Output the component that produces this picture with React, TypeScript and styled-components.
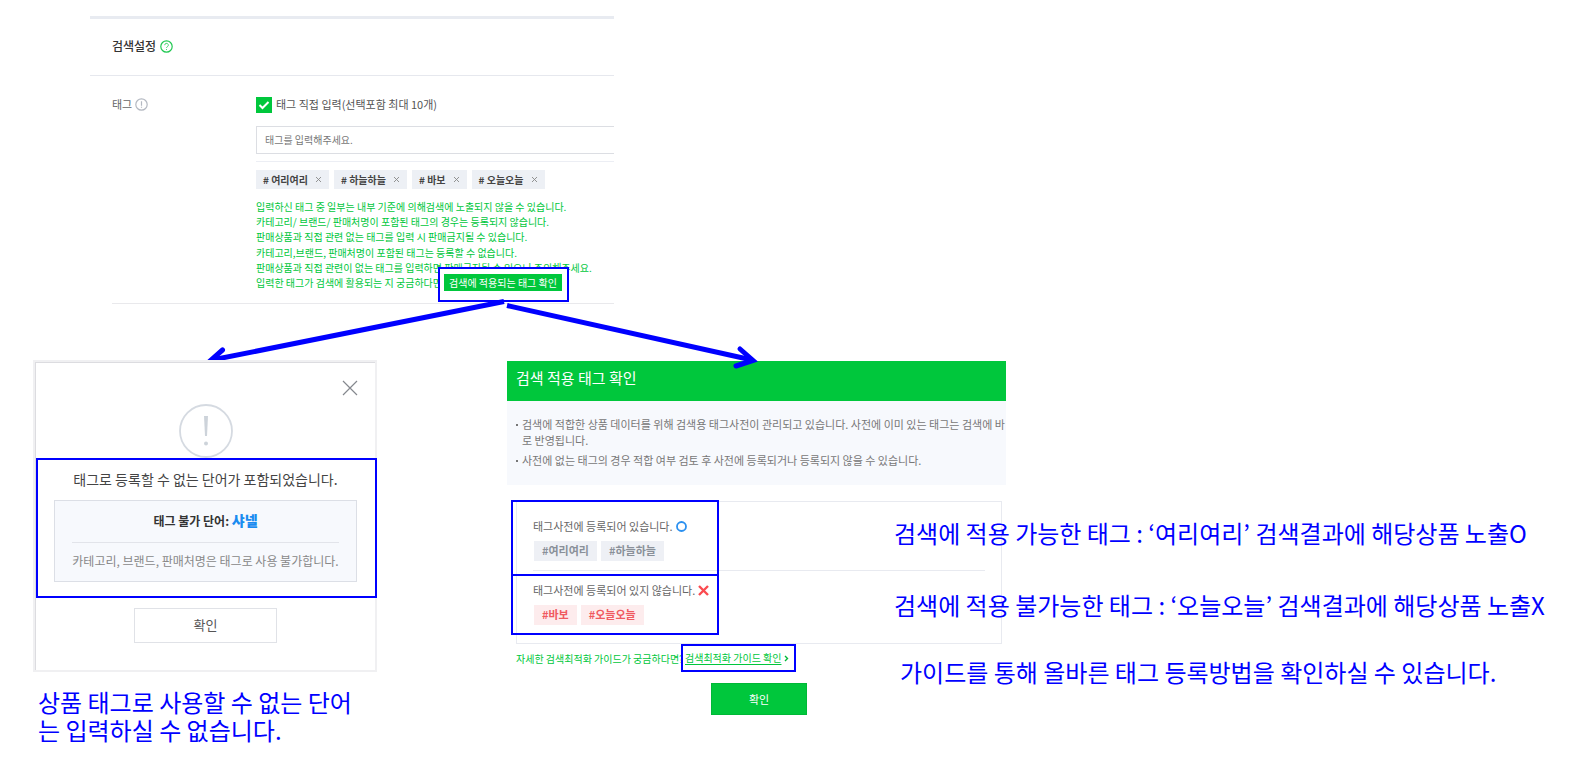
import React from 'react';
import styled, { createGlobalStyle } from 'styled-components';

const BLUE = '#0000ff';
const GREEN = '#00c73c';

const GlobalStyle = createGlobalStyle`
  *, *::before, *::after { box-sizing: border-box; }
  body { margin: 0; background: #fff; }
  body, button, input { font-family: "Noto Sans CJK KR", sans-serif; }
  h1, h2, p, ul { margin: 0; padding: 0; }
`;

const Page = styled.main`
  position: relative;
  padding: 16px 0 28px;
`;

/* ---------- search settings ---------- */

const Settings = styled.section`
  width: 33%;
  min-width: 520px;
  margin-left: 90px;
  border-top: 3px solid #e8ebf1;
`;

const SettingsHead = styled.header`
  display: flex;
  align-items: center;
  gap: 4px;
  height: 57px;
  padding: 0 0 2px 22px;
  border-bottom: 1px solid #e6e8ee;
`;

const SettingsTitle = styled.h2`
  font-size: 12px;
  line-height: 16px;
  font-weight: 500;
  color: #333;
`;

const SettingsRow = styled.div`
  display: grid;
  grid-template-columns: 144px 1fr;
  margin-left: 22px;
  padding: 21px 0 13px;
  border-bottom: 1px solid #e9e9ec;
`;

const RowLabel = styled.div`
  display: flex;
  align-items: center;
  gap: 3px;
  height: 14px;
  font-size: 11px;
  color: #666;
`;

const Fields = styled.div`
  position: relative;
  min-width: 0;
`;

const CheckLabel = styled.label`
  position: relative;
  display: flex;
  gap: 4px;
  height: 16px;
  font-size: 11px;
  line-height: 14px;
  color: #555;
`;

const CheckBox = styled.input`
  appearance: none;
  width: 16px;
  height: 16px;
  margin: 0;
  background: ${GREEN};
`;

const CheckMark = styled.svg`
  position: absolute;
  left: 0;
  top: 0;
  pointer-events: none;
`;

const TagInput = styled.input`
  display: block;
  width: 100%;
  height: 28px;
  margin-top: 13px;
  padding: 0 8px 2px;
  border: 1px solid #dcdee3;
  border-right: 0;
  border-radius: 0;
  font-size: 10px;
  &::placeholder { color: #777; opacity: 1; }
`;

const TagList = styled.ul`
  display: flex;
  gap: 5px;
  margin-top: 7px;
  padding-top: 8px;
  border-top: 1px solid #eceef4;
  list-style: none;
`;

const TagItem = styled.li`
  display: flex;
  align-items: center;
  gap: 7px;
  height: 19px;
  padding: 0 7px 1px;
  background: #edf0f5;
  font-size: 10px;
  font-weight: 700;
  color: #444;
`;

const RemoveTag = styled.button`
  display: flex;
  padding: 0;
  border: 0;
  background: none;
  color: #888;
`;

const Guide = styled.p`
  margin-top: 10px;
  font-size: 10px;
  line-height: 15px;
  color: ${GREEN};
  white-space: nowrap;
  & + & { margin-top: 1px; }
`;

const CheckCallout = styled.div`
  position: absolute;
  left: 182px;
  bottom: -12px;
  padding: 5px 5px 9px 4px;
  border: 2px solid ${BLUE};
  background: #fff;
`;

const SmallButton = styled.button`
  display: block;
  width: 118px;
  height: 17px;
  padding: 0;
  border: 0;
  background: ${GREEN};
  color: #fff;
  font-size: 10px;
  line-height: 16px;
  white-space: nowrap;
`;

/* ---------- lower area ---------- */

const Lower = styled.div`
  display: flex;
  align-items: flex-start;
  margin-top: 56px;
  padding-left: 33px;
`;

const LeftColumn = styled.div`
  flex: 0 0 344px;
`;

const Alert = styled.section`
  position: relative;
  display: flex;
  flex-direction: column;
  align-items: center;
  height: 312px;
  padding: 39px 18px 0 19px;
  border: 2px solid #f0f0f2;
  box-shadow: inset 1px 1px 0 #dcdce0;
`;

const CloseButton = styled.button`
  position: absolute;
  top: 18px;
  right: 17px;
  display: flex;
  padding: 0;
  border: 0;
  background: none;
`;

const AlertMessage = styled.p`
  margin-top: 6px;
  font-size: 14px;
  line-height: 24px;
  color: #444;
  white-space: nowrap;
`;

const AlertBox = styled.div`
  align-self: stretch;
  height: 82px;
  margin-top: 9px;
  padding: 0 17px;
  border: 1px solid #dcdfe6;
  background: #f7f9fd;
  text-align: center;
  white-space: nowrap;
`;

const BadWord = styled.p`
  height: 42px;
  border-bottom: 1px solid #e2e4ea;
  font-size: 12px;
  line-height: 40px;
  font-weight: 700;
  color: #333;
`;

const Word = styled.strong`
  font-size: 14px;
  line-height: 20px;
  color: #1a8cf0;
`;

const AlertNote = styled.p`
  display: flex;
  justify-content: center;
  font-size: 12px;
  line-height: 36px;
  color: #888;
`;

const AlertConfirm = styled.button`
  width: 143px;
  height: 35px;
  margin-top: 26px;
  padding: 0 0 2px;
  border: 1px solid #e0e2e7;
  background: #fff;
  color: #555;
  font-size: 13px;
`;

const Outline = styled.div<{ $top: number; $left: number; $width: number; $height: number }>`
  position: absolute;
  top: ${(p) => p.$top}px;
  left: ${(p) => p.$left}px;
  width: ${(p) => p.$width}px;
  height: ${(p) => p.$height}px;
  border: 2px solid ${BLUE};
  pointer-events: none;
`;

const Caption = styled.p`
  margin: 16px 0 0 5px;
  font-size: 24px;
  line-height: 28px;
  color: ${BLUE};
  white-space: nowrap;
`;

const Panel = styled.section`
  flex: 0 0 499px;
  margin: 1px 0 0 130px;
`;

const PanelTitle = styled.h1`
  height: 40px;
  padding-left: 9px;
  background: ${GREEN};
  color: #fff;
  font-size: 15px;
  line-height: 34px;
  font-weight: 400;
`;

const Notice = styled.ul`
  height: 84px;
  padding: 15px 0 0 15px;
  background: #f7f9fd;
  list-style: none;
  font-size: 11px;
  line-height: 16px;
  color: #777;
  white-space: nowrap;
`;

const NoticeItem = styled.li`
  position: relative;
  & + & { margin-top: 4px; }
  &::before {
    content: "";
    position: absolute;
    left: -6px;
    top: 8px;
    width: 2px;
    height: 2px;
    background: #777;
  }
`;

const Results = styled.div`
  position: relative;
  height: 143px;
  margin: 16px 4px 0 9px;
  padding: 15px 16px 0;
  border: 1px solid #e8eaf0;
`;

const ResultGroup = styled.div`
  height: 53px;
  & + & {
    height: 66px;
    padding-top: 10px;
    border-top: 1px solid #e8eaf0;
  }
`;

const ResultText = styled.p`
  display: flex;
  align-items: center;
  gap: 3px;
  height: 18px;
  font-size: 11px;
  color: #666;
  white-space: nowrap;
`;

const ResultTags = styled.div`
  display: flex;
  gap: 4px;
  margin: 6px 0 0 1px;
`;

const ResultTag = styled.span<{ $bad?: boolean }>`
  height: 20px;
  padding: 0 8px;
  background: ${(p) => (p.$bad ? '#fdeced' : '#eef0f5')};
  color: ${(p) => (p.$bad ? '#f05a5f' : '#8a9099')};
  font-size: 11px;
  line-height: 19px;
  font-weight: 700;
`;

const GuideLine = styled.p`
  position: relative;
  display: flex;
  height: 27px;
  margin-left: 9px;
  font-size: 10px;
  line-height: 29px;
  color: ${GREEN};
  white-space: nowrap;
`;

const LinkCallout = styled.span`
  position: absolute;
  left: 165px;
  top: 0;
  display: flex;
  align-items: center;
  gap: 3px;
  width: 115px;
  height: 28px;
  padding-left: 2px;
  border: 2px solid ${BLUE};
  background: #fff;
  line-height: 24px;
`;

const GuideLink = styled.a`
  color: ${GREEN};
  text-decoration: underline;
  text-underline-offset: 2px;
`;

const PanelConfirm = styled.button`
  display: block;
  width: 96px;
  height: 32px;
  margin: 12px auto 0 204px;
  border: 1px solid #00b837;
  background: ${GREEN};
  color: #fff;
  font-size: 11px;
`;

/* Remarks run across the right edge of the panel. */
const Remarks = styled.div`
  position: absolute;
  left: 894px;
  top: 515px;
  color: ${BLUE};
  font-size: 24px;
  line-height: 36px;
  white-space: nowrap;
`;

const Remark = styled.p<{ $gap?: number; $indent?: number }>`
  margin-top: ${(p) => p.$gap ?? 0}px;
  padding-left: ${(p) => p.$indent ?? 0}px;
`;

const Arrows = styled.svg`
  position: absolute;
  left: 200px;
  top: 295px;
  pointer-events: none;
`;

const TAGS = ['여리여리', '하늘하늘', '바보', '오늘오늘'];

export default function App() {
  return (
    <Page>
      <GlobalStyle />
      <Settings>
        <SettingsHead>
          <SettingsTitle>검색설정</SettingsTitle>
          <svg width="13" height="13" viewBox="0 0 13 13" fill="none" stroke="#22c853">
            <circle cx="6.5" cy="6.5" r="5.7" strokeWidth="1.2" />
            <path d="M4.7 5.2a1.8 1.8 0 1 1 2.7 1.5c-.6.4-.9.7-.9 1.3M6.5 9v1" strokeWidth=".8" />
          </svg>
        </SettingsHead>
        <SettingsRow>
          <RowLabel>
            태그
            <svg width="13" height="13" viewBox="0 0 13 13" fill="none" stroke="#b4b9c2">
              <circle cx="6.5" cy="6.5" r="5.7" strokeWidth="1.2" />
              <path d="M6.5 3.2v4.600M6.5 8.800v1" strokeWidth="1.2" />
            </svg>
          </RowLabel>
          <Fields>
            <CheckLabel>
              <CheckBox type="checkbox" defaultChecked />
              <CheckMark width="16" height="16" viewBox="0 0 16 16" fill="none" stroke="#fff" strokeWidth="2">
                <path d="M3.5 8l3 3 6-6" />
              </CheckMark>
              태그 직접 입력(선택포함 최대 10개)
            </CheckLabel>
            <TagInput aria-label="태그" placeholder="태그를 입력해주세요." />
            <TagList>
              {TAGS.map((tag) => (
                <TagItem key={tag}>
                  # {tag}
                  <RemoveTag type="button" aria-label={`${tag} 삭제`}>
                    <svg width="7" height="7" viewBox="0 0 7 7" stroke="currentColor" strokeWidth=".9">
                      <path d="M1 1l5 5M6 1l-5 5" />
                    </svg>
                  </RemoveTag>
                </TagItem>
              ))}
            </TagList>
            <Guide>
              입력하신 태그 중 일부는 내부 기준에 의해검색에 노출되지 않을 수 있습니다.
              <br />
              카테고리/ 브랜드/ 판매처명이 포함된 태그의 경우는 등록되지 않습니다.
              <br />
              판매상품과 직접 관련 없는 태그를 입력 시 판매금지될 수 있습니다.
            </Guide>
            <Guide>
              카테고리,브랜드, 판매처명이 포함된 태그는 등록할 수 없습니다.
              <br />
              판매상품과 직접 관련이 없는 태그를 입력하면 판매금지될 수 있으니 주의해주세요.
              <br />
              입력한 태그가 검색에 활용되는 지 궁금하다면?
            </Guide>
            <CheckCallout>
              <SmallButton type="button">검색에 적용되는 태그 확인</SmallButton>
            </CheckCallout>
          </Fields>
        </SettingsRow>
      </Settings>

      <Lower>
        <LeftColumn>
          <Alert>
            <CloseButton type="button" aria-label="닫기">
              <svg width="16" height="16" viewBox="0 0 16 16" stroke="#85888e" strokeWidth="1.2">
                <path d="M1 1l14 14M15 1L1 15" />
              </svg>
            </CloseButton>
            <svg width="54" height="60" viewBox="0 0 54 60" fill="none">
              <circle cx="27" cy="30" r="26" stroke="#d5dae1" strokeWidth="1.8" />
              <path d="M25 15h4l-1 20h-2z" fill="#cdd3da" />
              <circle cx="27" cy="42.500" r="2" fill="#cdd3da" />
            </svg>
            <AlertMessage>태그로 등록할 수 없는 단어가 포함되었습니다.</AlertMessage>
            <AlertBox>
              <BadWord>
                태그 불가 단어: <Word>샤넬</Word>
              </BadWord>
              <AlertNote>카테고리, 브랜드, 판매처명은 태그로 사용 불가합니다.</AlertNote>
            </AlertBox>
            <AlertConfirm type="button">확인</AlertConfirm>
            <Outline $top={96} $left={1} $width={341} $height={140} />
          </Alert>
          <Caption>
            상품 태그로 사용할 수 없는 단어
            <br />는 입력하실 수 없습니다.
          </Caption>
        </LeftColumn>

        <Panel>
          <PanelTitle>검색 적용 태그 확인</PanelTitle>
          <Notice>
            <NoticeItem>
              검색에 적합한 상품 데이터를 위해 검색용 태그사전이 관리되고 있습니다. 사전에 이미 있는 태그는 검색에 바
              <br />로 반영됩니다.
            </NoticeItem>
            <NoticeItem>사전에 없는 태그의 경우 적합 여부 검토 후 사전에 등록되거나 등록되지 않을 수 있습니다.</NoticeItem>
          </Notice>
          <Results>
            <ResultGroup>
              <ResultText>
                태그사전에 등록되어 있습니다.
                <svg width="11" height="11" viewBox="0 0 11 11" fill="none">
                  <circle cx="5.5" cy="5.5" r="4.5" stroke="#2b90f0" strokeWidth="1.8" />
                </svg>
              </ResultText>
              <ResultTags>
                <ResultTag>#여리여리</ResultTag>
                <ResultTag>#하늘하늘</ResultTag>
              </ResultTags>
            </ResultGroup>
            <ResultGroup>
              <ResultText>
                태그사전에 등록되어 있지 않습니다.
                <svg width="11" height="11" viewBox="0 0 11 11" stroke="#fb4b50" strokeWidth="2.4">
                  <path d="M1 1l9 9M10 1l-9 9" />
                </svg>
              </ResultText>
              <ResultTags>
                <ResultTag $bad>#바보</ResultTag>
                <ResultTag $bad>#오늘오늘</ResultTag>
              </ResultTags>
            </ResultGroup>
            <Outline $top={-2} $left={-6} $width={208} $height={76} />
            <Outline $top={72} $left={-6} $width={208} $height={61} />
          </Results>
          <GuideLine>
            자세한 검색최적화 가이드가 궁금하다면?
            <LinkCallout>
              <GuideLink href="#guide">검색최적화 가이드 확인</GuideLink>
              <svg width="5" height="7" viewBox="0 0 5 7" fill="none" stroke="#00b838" strokeWidth="1.4">
                <path d="M1 1l2.500 2.500L1 6" />
              </svg>
            </LinkCallout>
          </GuideLine>
          <PanelConfirm type="button">확인</PanelConfirm>
        </Panel>
      </Lower>

      <Remarks>
        <Remark>검색에 적용 가능한 태그 : ‘여리여리’ 검색결과에 해당상품 노출O</Remark>
        <Remark $gap={36}>검색에 적용 불가능한 태그 : ‘오늘오늘’ 검색결과에 해당상품 노출X</Remark>
        <Remark $gap={31} $indent={6}>
          가이드를 통해 올바른 태그 등록방법을 확인하실 수 있습니다.
        </Remark>
      </Remarks>

      <Arrows width="570" height="80" viewBox="0 0 570 80" fill="none" stroke={BLUE} strokeWidth="5">
        <clipPath id="above-alert">
          <rect width="570" height="65" />
        </clipPath>
        <g clipPath="url(#above-alert)">
          <path d="M304 6.500L12 65" />
          <path d="M22.500 55L10 66l17 6" strokeLinecap="round" />
        </g>
        <path d="M307 10.500L552 65" />
        <path d="M540 54l13 11.500L536 71" strokeLinecap="round" />
      </Arrows>
    </Page>
  );
}
